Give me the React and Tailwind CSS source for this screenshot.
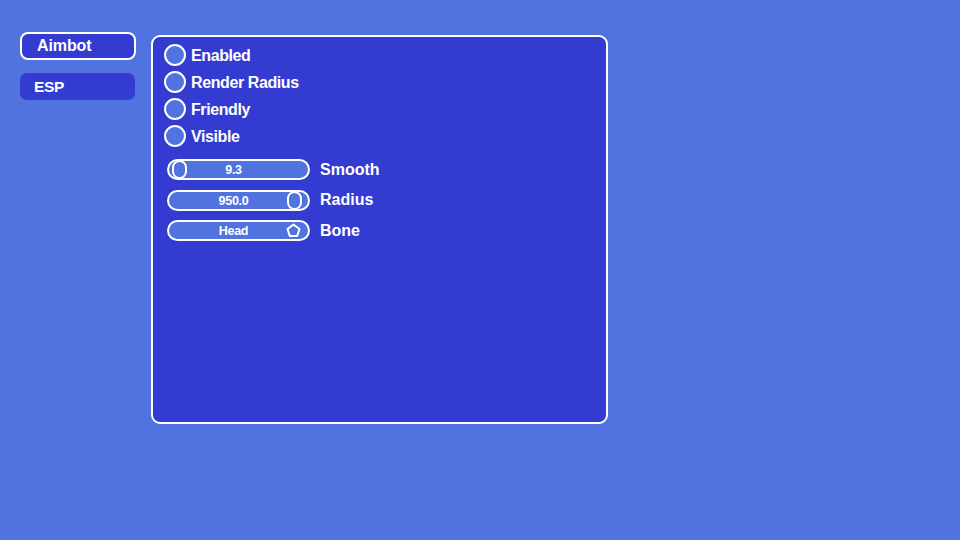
export default function App() {
  const font = { fontFamily: '"Liberation Sans", Arial, sans-serif' };
  const checks = ["Enabled", "Render Radius", "Friendly", "Visible"];
  return (
    <div className="w-[960px] h-[540px] bg-[#5073e0] flex items-start text-white" style={font}>
      <div className="flex flex-col gap-[13px] pl-[20px] pt-[32px] w-[151px] shrink-0">
        <div className="w-[116px] h-[28px] rounded-[8px] border-2 border-white bg-[#333bd0] flex items-center pl-[15px] text-[16px] font-bold tracking-[-0.1px]">Aimbot</div>
        <div className="w-[115px] h-[27px] rounded-[7px] bg-[#333bd0] flex items-center pl-[14px] text-[15.5px] font-bold tracking-[-0.3px]">ESP</div>
      </div>
      <div className="mt-[35px] w-[457px] h-[389px] rounded-[9px] border-2 border-white bg-[#333bd0] pl-[11px] pt-[7px] flex flex-col">
        <div className="flex flex-col gap-[6px]">
          {checks.map((c) => (
            <div key={c} className="flex items-center h-[21px] gap-[5px]">
              <div className="w-[22px] h-[22px] rounded-full border-2 border-white bg-[#5073e0]" />
              <span className="text-[16px] font-bold tracking-[-0.4px] translate-y-[1px]">{c}</span>
            </div>
          ))}
        </div>
        <div className="flex flex-col gap-[9px] mt-[13px] pl-[3px]">
          <Slider value="9.3" label="Smooth" knob="left" />
          <Slider value="950.0" label="Radius" knob="right" />
          <Slider value="Head" label="Bone" knob="pent" />
        </div>
      </div>
    </div>
  );
}

function Slider({ value, label, knob }) {
  return (
    <div className="flex items-center gap-[10px] h-[21.5px]">
      <div className="relative w-[143px] h-[21px] rounded-full border-2 border-white bg-[#5073e0] flex items-center justify-center pr-[10px]">
        <span className="text-[12.5px] font-bold tracking-[-0.3px] translate-y-[1px]">{value}</span>
        {knob === "left" && (
          <div className="absolute left-[3px] top-[-1px] w-[15px] h-[19px] rounded-full border-2 border-white" />
        )}
        {knob === "right" && (
          <div className="absolute right-[6px] top-[-1px] w-[15px] h-[19px] rounded-full border-2 border-white" />
        )}
        {knob === "pent" && (
          <svg className="absolute right-[7px] top-[1px]" width="15" height="15" viewBox="0 0 15 15">
            <path d="M7.5 1.5 L13.5 6 L11.2 13 L3.8 13 L1.5 6 Z" fill="none" stroke="white" strokeWidth="2" strokeLinejoin="round" />
          </svg>
        )}
      </div>
      <span className="text-[16px] font-bold">{label}</span>
    </div>
  );
}
